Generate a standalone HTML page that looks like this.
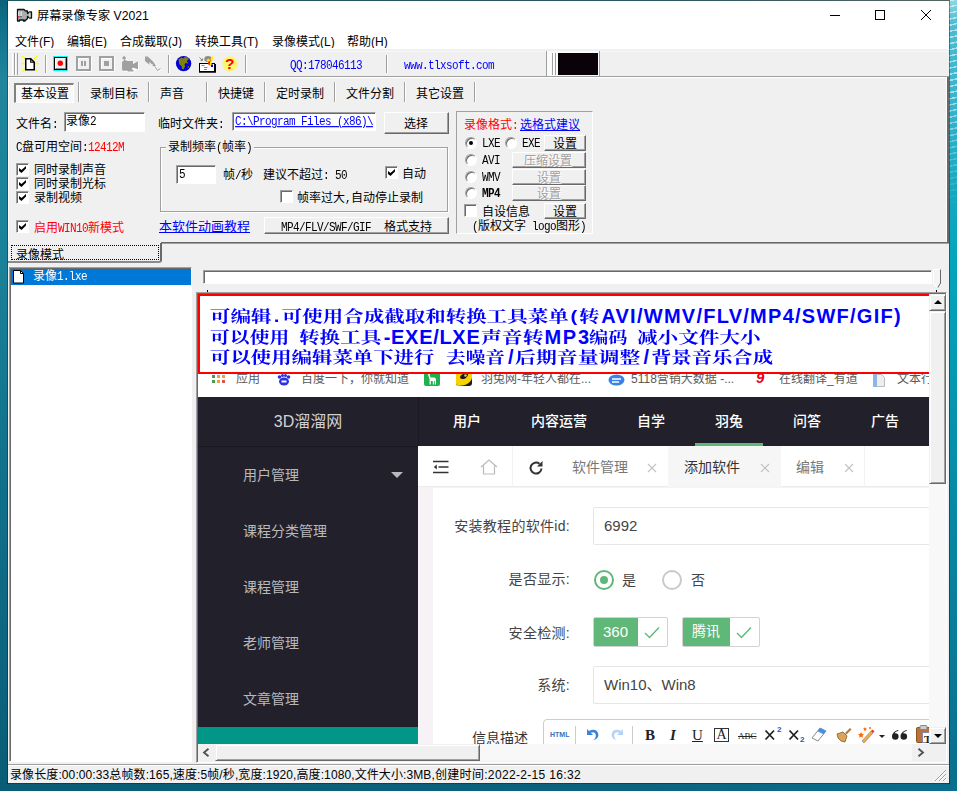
<!DOCTYPE html>
<html lang="zh-CN">
<head>
<meta charset="utf-8">
<title>屏幕录像专家 V2021</title>
<style>
*{box-sizing:border-box;margin:0;padding:0}
html,body{width:957px;height:791px;overflow:hidden}
body{position:relative;background:#0c607a;font-family:"Liberation Sans","Noto Sans CJK SC",sans-serif;font-size:12px;color:#000}
.abs,.abs>*{position:absolute}
#bgL{left:0;top:0;width:8px;height:791px;background:linear-gradient(#0c627a 0,#10708a 3%,#1f869c 10%,#1a8299 32%,#10718b 60%,#0a5c76 100%)}
#bgR{left:949px;top:0;width:8px;height:791px;background:linear-gradient(#8fd6e2 0,#4cbcd2 3%,#34b3cc 14%,#16a8c1 24%,#04a5bc 33%,#0886a3 67%,#0a6e8c 100%)}
#bgRt{left:949px;top:0;width:8px;height:210px;background:repeating-linear-gradient(168deg,rgba(255,255,255,.55) 0,rgba(255,255,255,.55) 1.500px,rgba(255,255,255,0) 1.500px,rgba(255,255,255,0) 6px);-webkit-mask-image:linear-gradient(#000 0,#000 45%,transparent 100%);mask-image:linear-gradient(#000 0,#000 45%,transparent 100%)}
#bgB{left:0;top:783px;width:957px;height:8px;background:linear-gradient(90deg,#0a5c76,#0b627c 60%,#0a6e8c)}
#bgT{left:7px;top:0;width:943px;height:1px;background:linear-gradient(90deg,#1d5560,#2b5761 70%,#566562)}
#bdL{left:7px;top:1px;width:1px;height:783px;background:rgba(0,0,0,.3)}#bdR{left:949px;top:1px;width:1px;height:783px;background:rgba(0,0,0,.38)}#bdB{left:7px;top:783px;width:943px;height:1px;background:rgba(0,0,0,.3)}
#win{left:8px;top:1px;width:941px;height:782px;background:#f0f0f0;overflow:hidden}
/* everything inside #win positioned relative to page using offset -8,-1 */
#win>.in{left:-8px;top:-1px;width:957px;height:791px}
.in>*{position:absolute}
/* fonts */
.ui{font:12px/16px "Liberation Sans","Noto Sans CJK SC",sans-serif;white-space:nowrap}
.s{font:12px/14px "Noto Sans CJK SC","Liberation Sans",sans-serif;white-space:nowrap;color:#000}
.s b{display:inline-block;font:11px/14px "Liberation Mono",monospace;letter-spacing:-.6px;font-weight:400;transform:scaleY(1.18);transform-origin:0 76%;white-space:pre}
.lnk b{text-decoration:underline}
.red{color:#f00}.blue{color:#00f}.lnk{color:#00f;text-decoration:underline}
.gray{color:#a0a0a0;text-shadow:1px 1px #fff}
.sep{width:2px;border-left:1px solid #a0a0a0;border-right:1px solid #fff}
.grip{width:3px;border-left:1px solid #fff;border-right:1px solid #a0a0a0;background:#f0f0f0}
.sunk{background:#fff;border:1px solid;border-color:#a0a0a0 #fff #fff #a0a0a0;box-shadow:inset 1px 1px #696969}
.btn{background:#f0f0f0;border:1px solid;border-color:#fff #696969 #696969 #fff;box-shadow:inset -1px -1px #a0a0a0;text-align:center}
.cb{width:13px;height:13px;background:#fff;border:1px solid;border-color:#a0a0a0 #fff #fff #a0a0a0;box-shadow:inset 1px 1px #696969}
.cb.on:after{content:"";position:absolute;left:2px;top:2px;width:7px;height:7px;background:#000;clip-path:polygon(0 28%,0 72%,36% 100%,100% 36%,100% 0,36% 58%)}
.rb{width:12px;height:12px;border-radius:50%;background:#fff;border:1px solid;border-color:#a0a0a0 #fff #fff #a0a0a0;box-shadow:inset 1px 1px #696969}
.rb.on:after{content:"";position:absolute;left:3px;top:3px;width:4px;height:4px;border-radius:50%;background:#000}
.tsep{width:2px;height:20px;top:82px;border-left:1px solid #a0a0a0;border-right:1px solid #fff}
.pv{font-family:"Liberation Sans","Noto Sans CJK SC",sans-serif;white-space:nowrap}
.sb{color:#b9b9bd;font-size:14px;line-height:20px;left:45px}
.nav{color:#fff;font-size:14px;line-height:20px;top:117px;font-weight:500}
.lab{color:#444;font-size:14px;line-height:20px;text-align:right;width:140px;left:232px;letter-spacing:.3px}
.tip i{display:inline-block;width:8px;font-style:normal;text-align:center}
.tip{font:bold 16px/20px "Liberation Sans","Noto Serif CJK SC",serif;color:#00f;transform:scaleX(1.29);transform-origin:0 0;white-space:nowrap}
#pv>*{position:absolute}
.bk{font-size:12px;line-height:14px;color:#5a5a5a;top:78px}
.tab{font-size:14px;line-height:20px;top:163px;color:#777}
.x{font-size:17px;line-height:20px;top:161px;color:#bbb;font-weight:300}
.rd{width:20px;height:20px;border-radius:50%;border:2px solid #c9c9c9;background:#fff;top:275.5px}
.ck{height:30px;top:323px;border:1px solid #d2d2d2;border-radius:2px;background:#fff;overflow:hidden}
.inp{left:395px;width:400px;height:38px;border:1px solid #e6e6e6;border-radius:2px;background:#fff}
.rs{background:#f0f0f0;border:1px solid;border-color:#f0f0f0 #696969 #696969 #f0f0f0;box-shadow:inset 1px 1px #fff,inset -1px -1px #a0a0a0}
</style>
</head>
<body>
<div class="abs">
<div id="bgL"></div><div id="bgR"></div><div id="bgRt"></div><div id="bgB"></div><div id="bgT"></div><div id="bdL"></div><div id="bdR"></div><div id="bdB"></div>
<div id="win" class="abs"><div class="in">
<div style="left:8px;top:1px;width:941px;height:30px;background:#fff"></div>
<svg style="left:16px;top:8px" width="17" height="14" viewBox="0 0 17 14"><path d="M1.500 1.500h6.500l1.500 1.500h2v2.500l2-1.500h2v6h-2l-2-1.500v2l-1.500 1.500h-1v1h-1.500v-1h-4v1h-2v-2.500z" fill="#a9aea9" stroke="#111" stroke-width="1.300" stroke-linejoin="round"/><path d="M2.500 3.500v5M4 3.500v5M5.500 3.500v5" stroke="#e8e8e8" stroke-width=".8"/><rect x="1.800" y="8" width="1.300" height="1.300" fill="#e33"/><rect x="3.100" y="8" width="1.300" height="1.300" fill="#3a3"/><rect x="4.400" y="8" width="1.300" height="1.300" fill="#33e"/><path d="M13.800 4.500v5" stroke="#ddd" stroke-width="1"/></svg>
<div class="ui" style="left:37px;top:8px;font-size:12.2px">屏幕录像专家 V2021</div>
<svg style="left:826px;top:1px" width="123" height="30" viewBox="0 0 123 30" fill="none" stroke="#000" stroke-width="1"><path d="M4 14.500H14"/><rect x="49.500" y="9.500" width="9" height="9"/><path d="M95 9L105 19M105 9L95 19"/></svg>
<!--TITLE-->
<div style="left:8px;top:31px;width:941px;height:18px;background:#fff"></div>
<div class="ui" style="left:15px;top:33.6px">文件(F)</div>
<div class="ui" style="left:67px;top:33.6px">编辑(E)</div>
<div class="ui" style="left:120px;top:33.6px">合成截取(J)</div>
<div class="ui" style="left:195px;top:33.6px">转换工具(T)</div>
<div class="ui" style="left:272px;top:33.6px">录像模式(L)</div>
<div class="ui" style="left:347px;top:33.6px">帮助(H)</div>
<div style="left:8px;top:48px;width:941px;height:1px;background:#fff"></div><div style="left:8px;top:49px;width:941px;height:2px;background:#f0f0f0"></div>
<!--MENU-->
<div style="left:8px;top:51px;width:941px;height:1px;background:#f8f8f8"></div>
<div style="left:8px;top:76px;width:941px;height:1px;background:#a0a0a0"></div>
<div style="left:8px;top:77px;width:941px;height:1px;background:#fff"></div>
<div class="grip" style="left:12px;top:53px;height:22px"></div><div class="grip" style="left:15px;top:53px;height:22px"></div>
<svg style="left:21px;top:55px" width="18" height="18" viewBox="0 0 18 18"><path d="M1.500 1l4 4M16.500 1l-4 4M0.500 8.500h3.500M17.500 8.500h-3M1.500 16.500l4-4M16.500 16.500l-4-4" stroke="#ff0" stroke-width="1.600"/><path d="M4.750 3.750h5l3.500 3.500v7.500h-8.500z" fill="#fff" stroke="#000" stroke-width="1.500"/><path d="M9.750 3.750v3.500h3.500" fill="none" stroke="#000" stroke-width="1.200"/></svg>
<div class="sep" style="left:45px;top:55px;height:18px"></div>
<svg style="left:53px;top:56px" width="15" height="15" viewBox="0 0 15 15"><rect x="0.500" y="0.500" width="14" height="14" fill="#f0f0f0" stroke="#0ff"/><rect x="1.500" y="1.500" width="12" height="12" fill="#f0f0f0" stroke="#000"/><path d="M2.500 12.700h10.200V2.500" fill="none" stroke="#000" stroke-width=".5"/><path d="M2.500 12V2.500H12" fill="none" stroke="#fff"/><circle cx="7.300" cy="7.300" r="2.700" fill="#f00"/></svg>
<svg style="left:76px;top:56px" width="16" height="16" viewBox="0 0 16 16"><rect x="1.500" y="1.500" width="14" height="14" fill="none" stroke="#fff"/><rect x="1" y="1" width="13" height="13" fill="#f0f0f0" stroke="#a0a0a0" stroke-width="2"/><path d="M2.500 12.500V2.500H12.500" fill="none" stroke="#fff"/><rect x="5" y="5" width="2" height="5" fill="#a0a0a0"/><rect x="8" y="5" width="2" height="5" fill="#a0a0a0"/></svg>
<svg style="left:99px;top:56px" width="16" height="16" viewBox="0 0 16 16"><rect x="1.500" y="1.500" width="14" height="14" fill="none" stroke="#fff"/><rect x="1" y="1" width="13" height="13" fill="#f0f0f0" stroke="#a0a0a0" stroke-width="2"/><path d="M2.500 12.500V2.500H12.500" fill="none" stroke="#fff"/><rect x="5" y="5" width="5" height="5" fill="#a0a0a0"/></svg>
<svg style="left:121px;top:55px" width="19" height="19" viewBox="0 0 19 19"><g transform="translate(1 1)" fill="#fff"><path d="M3 .8L5.300 3.200 3.500 5 1 3.200z"/><path d="M3 4.500l3.500 1.500H12v3l5-2.800v8l-2.500-.6-2 1.400v1.500H7l-.5-.8H2L1 14.500V7l1.500-1z"/></g><g fill="#a0a0a0"><path d="M3 .8L5.300 3.200 3.500 5 1 3.200z"/><path d="M3 4.500l3.500 1.500H12v3l5-2.800v8l-2.500-.6c-1.500-1.800-3.500-.8-4 .6l2 .8v1.500H7l-.5-.8H2L1 14.500V7l1.500-1z"/></g></svg>
<svg style="left:144px;top:55px" width="19" height="19" viewBox="0 0 19 19"><g transform="translate(1 1)"><path d="M1 1.500h2.800l5.700 5.500 2.500 4-2 .5L4.500 9 1 6z" fill="#fff"/><path d="M11 11.500l2.500 4 3-2" fill="none" stroke="#fff"/></g><path d="M1 1.500h2.800l5.700 5.500 2.500 4-2 .5L4.500 9 1 6z" fill="#a0a0a0"/><path d="M5.500 7.500c.5 1.500 2 2.500 3.500 2.500" fill="none" stroke="#f0f0f0" stroke-width="1.200"/><path d="M11 11.500l2.500 4 3-2" fill="none" stroke="#a0a0a0"/></svg>
<div class="sep" style="left:168px;top:55px;height:18px"></div>
<svg style="left:175px;top:55px" width="17" height="17" viewBox="0 0 17 17"><circle cx="8.600" cy="8.600" r="7.700" fill="#0000d8"/><path d="M3.500 4.500l3-2 1.500 1 2-1.500 2.500.5L14 4l-1.500 1-.5 2 1.500 1-1 .5-2-.5-1 1.500.5 2-1.500 3-1.500-.5-.5-3-2-1.500-.5-2z" fill="#808010"/><path d="M13 11l1 .5-.5 1.500-1-.5z" fill="#808010"/></svg>
<svg style="left:198px;top:55px" width="18" height="18" viewBox="0 0 18 18"><rect x="1.500" y="8.500" width="15" height="8" fill="#fff" stroke="#000"/><path d="M1 17h16.500V9" fill="none" stroke="#000" stroke-width="1.400"/><path d="M3.500 10.500h3M6 12.500h3.500M6 14.500h3" stroke="#888"/><path d="M1.500 2.500l3 3M4.500 3.500v2h-2" stroke="#888" fill="none"/><ellipse cx="10" cy="4" rx="3.800" ry="3" fill="#8c8c8c"/><path d="M8.500 5l2-1.500 1 1.500L15.500 0l-1 5-1 2.500.5 3-2 .5-1.500-2.500-1-2z" fill="#ffee00"/><path d="M9.500 6l1.500 1 2-3.500-1 4-.5 3-1-.5-.2-2.500z" fill="#f00"/><rect x="13" y="9.500" width="2" height="2.500" fill="#0000e0"/></svg>
<svg style="left:222px;top:56px" width="16" height="16" viewBox="0 0 16 16"><circle cx="7.800" cy="7.800" r="7.500" fill="#fff56e"/><text x="7.800" y="13.200" text-anchor="middle" font-family="Liberation Sans,sans-serif" font-weight="bold" font-size="15.500" fill="#f00">?</text></svg>
<div class="sep" style="left:245px;top:55px;height:18px"></div>
<div class="s blue" style="left:290px;top:57px"><b>QQ:178046113</b></div>
<div class="sep" style="left:386px;top:55px;height:18px"></div>
<div class="s blue" style="left:404px;top:57px"><b>www.tlxsoft.com</b></div>
<div style="left:546px;top:51px;width:54px;height:25px;background:#fafafa;border-left:1px solid #a0a0a0;border-right:1px solid #a0a0a0"></div>
<div class="grip" style="left:550px;top:53px;height:22px;background:#fafafa"></div><div class="grip" style="left:553px;top:53px;height:22px;background:#fafafa"></div>
<div style="left:558px;top:53px;width:40px;height:22px;background:#0a0208"></div>
<!--TOOLBAR-->
<div style="left:14px;top:83px;width:60px;height:20px;background:#f8f8f8;border:solid;border-width:2px 1px 1px 2px;border-color:#808080 #fff #fff #808080"></div>
<div class="s" style="left:21px;top:86px">基本设置</div>
<div class="tsep" style="left:78px"></div>
<div class="s" style="left:90px;top:86px">录制目标</div>
<div class="tsep" style="left:148px"></div>
<div class="s" style="left:160px;top:86px">声音</div>
<div class="tsep" style="left:206px"></div>
<div class="s" style="left:218px;top:86px">快捷键</div>
<div class="tsep" style="left:264px"></div>
<div class="s" style="left:276px;top:86px">定时录制</div>
<div class="tsep" style="left:334px"></div>
<div class="s" style="left:346px;top:86px">文件分割</div>
<div class="tsep" style="left:404px"></div>
<div class="s" style="left:416px;top:86px">其它设置</div>
<div class="tsep" style="left:474px"></div>
<div style="left:946px;top:77px;width:1px;height:165px;background:#fff"></div><div style="left:947px;top:77px;width:2px;height:167px;background:#696969"></div>
<div style="left:8px;top:78px;width:1px;height:164px;background:#fff"></div>
<!--TABS-->
<div class="s" style="left:16px;top:116px">文件名<b>:</b></div>
<div class="sunk" style="left:64px;top:112px;width:81px;height:20px"></div>
<div class="s" style="left:66px;top:113px">录像<b>2</b></div>
<div class="s" style="left:158px;top:116px">临时文件夹<b>:</b></div>
<div class="sunk" style="left:232px;top:112px;width:144px;height:19px"></div>
<div class="s lnk" style="left:235px;top:113px"><b>C:\Program Files (x86)\</b></div>
<div class="btn" style="left:384px;top:112px;width:65px;height:22px"></div>
<div class="s" style="left:404px;top:116px">选择</div>
<div class="s" style="left:16px;top:139px"><b>C</b>盘可用空间<b>:</b><span class="red"><b>12412M</b></span></div>
<div class="cb on" style="left:16px;top:163px"></div><div class="s" style="left:34px;top:162px">同时录制声音</div>
<div class="cb on" style="left:16px;top:177px"></div><div class="s" style="left:34px;top:176px">同时录制光标</div>
<div class="cb on" style="left:16px;top:191px"></div><div class="s" style="left:34px;top:190px">录制视频</div>
<div class="cb on" style="left:16px;top:220px"></div><div class="s red" style="left:34px;top:220px">启用<b>WIN10</b>新模式</div>
<div style="left:160px;top:147px;width:288px;height:65px;border:1px solid #a0a0a0;box-shadow:inset 1px 1px #fff,1px 1px #fff"></div>
<div class="s" style="left:166px;top:139px;background:#f0f0f0;padding:0 2px">录制频率<b>(</b>帧率<b>)</b></div>
<div class="sunk" style="left:176px;top:165px;width:40px;height:19px"></div>
<div class="s" style="left:179px;top:166px"><b>5</b></div>
<div class="s" style="left:223px;top:167px">帧<b>/</b>秒</div>
<div class="s" style="left:263px;top:167px">建议不超过<b>: 50</b></div>
<div class="cb on" style="left:385px;top:166px"></div><div class="s" style="left:402px;top:166px">自动</div>
<div class="cb" style="left:280px;top:190px"></div><div class="s" style="left:297px;top:190px">帧率过大<b>,</b>自动停止录制</div>
<div class="s lnk" style="left:159px;top:219px;font-size:13px">本软件动画教程</div>
<div class="btn" style="left:264px;top:217px;width:185px;height:17px"></div>
<div class="s" style="left:281px;top:219px"><b>MP4/FLV/SWF/GIF</b></div><div class="s" style="left:384px;top:219px">格式支持</div>
<div style="left:456px;top:111px;width:137px;height:123px;border:1px solid;border-color:#a0a0a0 #fff #fff #a0a0a0"></div>
<div class="s red" style="left:464px;top:117px">录像格式<b>:</b></div><div class="s lnk" style="left:520px;top:117px">选格式建议</div>
<div class="rb on" style="left:465px;top:137px"></div><div class="s" style="left:482px;top:135px"><b>LXE</b></div>
<div class="rb" style="left:505px;top:137px"></div><div class="s" style="left:522px;top:135px"><b>EXE</b></div>
<div class="btn" style="left:544px;top:135px;width:42px;height:16px"></div><div class="s" style="left:553px;top:136px">设置</div>
<div class="rb" style="left:465px;top:154px"></div><div class="s" style="left:482px;top:152px"><b>AVI</b></div>
<div class="btn" style="left:512px;top:152px;width:74px;height:16px"></div><div class="s gray" style="left:524px;top:153px">压缩设置</div>
<div class="rb" style="left:465px;top:171px"></div><div class="s" style="left:482px;top:169px"><b>WMV</b></div>
<div class="btn" style="left:512px;top:169px;width:74px;height:16px"></div><div class="s gray" style="left:537px;top:170px">设置</div>
<div class="rb" style="left:465px;top:187px"></div><div class="s" style="left:482px;top:185px"><b style="font-weight:700">MP4</b></div>
<div class="btn" style="left:512px;top:185px;width:74px;height:16px"></div><div class="s gray" style="left:537px;top:186px">设置</div>
<div class="cb" style="left:464px;top:204px"></div><div class="s" style="left:482px;top:204px">自设信息</div>
<div class="btn" style="left:544px;top:203px;width:42px;height:16px"></div><div class="s" style="left:553px;top:204px">设置</div>
<div class="s" style="left:472px;top:218px"><b>(</b>版权文字<b> logo</b>图形<b>)</b></div>
<!--SETTINGS-->
<div style="left:161px;top:242px;width:788px;height:2px;background:#696969;border-bottom:1px solid #a0a0a0"></div>
<div style="left:11px;top:245px;width:148px;height:15px;border:1px dotted #000"></div>
<div style="left:8px;top:243px;width:154px;height:20px;border-right:2px solid #696969;border-bottom:2px solid #8a8a8a;border-radius:0 0 3px 0"></div>
<div class="s" style="left:16px;top:247px">录像模式</div>
<div style="left:9px;top:267px;width:183px;height:495px;background:#fff;border:1px solid;border-color:#a0a0a0 #fff #fff #a0a0a0;box-shadow:inset 1px 1px #696969"></div>
<div style="left:11px;top:269px;width:180px;height:16px;background:#0078d7"></div>
<svg style="left:13px;top:270px" width="12" height="14" viewBox="0 0 12 14"><path d="M0.500 0.500h7l3 3v9.500h-10z" fill="#fff" stroke="#000"/><path d="M7.500 0.500v3h3" fill="none" stroke="#000"/></svg>
<div class="s" style="left:33px;top:268px;color:#fff">录像<b>1.lxe</b></div>
<!--LEFT-->
<div class="sunk" style="left:203px;top:270px;width:729px;height:14px"></div>
<div style="left:933px;top:269px;width:8px;height:15px;background:#f4f4f4;border:1px solid;border-color:#fff #696969 #f4f4f4 #fff"></div>
<svg style="left:933px;top:283px" width="9" height="6" viewBox="0 0 9 6"><path d="M0.500 0L4.500 5 7.500 0z" fill="#f4f4f4"/><path d="M4.500 5L7.500 0" stroke="#696969" fill="none"/><path d="M0.500 0L4.500 5" stroke="#fff" fill="none"/></svg>
<div style="left:207px;top:290px;width:1px;height:2px;background:#000"></div><div style="left:936px;top:290px;width:1px;height:2px;background:#000"></div>
<div style="left:196px;top:292px;width:751px;height:471px;border:1px solid;border-color:#a0a0a0 #fff #fff #a0a0a0;box-shadow:inset 1px 1px #696969"></div>
<div id="pv" class="pv" style="left:198px;top:294px;width:731px;height:450px;overflow:hidden;background:#fff">
<div style="left:0;top:79px;width:731px;height:24px;background:#fff"></div>
<svg style="left:14px;top:81px" width="14" height="9" viewBox="0 0 14 9"><rect x="0" y="0" width="3" height="3" fill="#4a9c4a"/><rect x="5" y="0" width="3" height="3" fill="#e8a33d"/><rect x="10" y="0" width="3" height="3" fill="#e8a33d"/><rect x="0" y="5" width="3" height="3" fill="#4a9c4a"/><rect x="5" y="5" width="3" height="3" fill="#e8a33d"/><rect x="10" y="5" width="3" height="3" fill="#d9534f"/></svg>
<div class="bk" style="left:38px">应用</div>
<svg style="left:79px;top:80px" width="14" height="12" viewBox="0 0 14 12"><ellipse cx="7" cy="7.500" rx="5" ry="4" fill="#2a32e0"/><circle cx="2.500" cy="3" r="1.800" fill="#2a32e0"/><circle cx="11.500" cy="3" r="1.800" fill="#2a32e0"/><circle cx="5.500" cy="1.500" r="1.500" fill="#2a32e0"/><circle cx="8.500" cy="1.500" r="1.500" fill="#2a32e0"/><rect x="4.500" y="6.500" width="5" height="2" fill="#fff"/></svg>
<div class="bk" style="left:103px">百度一下，你就知道</div>
<svg style="left:226px;top:76px" width="16" height="16" viewBox="0 0 16 16"><rect width="16" height="16" rx="2" fill="#1fb14e"/><path d="M4 4.500c0-1 1-1.500 1.500-.5l1 3.500h3.500c1.500 0 2 1 2 2.500v4.500h-1.200v-3.500h-.8v3.500h-1.200v-3.500h-2v3.500h-1.200v-5z" fill="#fff"/></svg>
<svg style="left:258px;top:76px" width="16" height="16" viewBox="0 0 16 16"><rect width="16" height="16" rx="3" fill="#1a1a1a"/><path d="M0 3a3 3 0 0 1 3-3h10a3 3 0 0 1 3 3v5c-1 4-5 7-10 7.500l-4 .5a3 3 0 0 1-2-3z" fill="#f8d200"/><path d="M4 7c1-3 5-4.500 8-3 0 3-3 5.500-6 5-1.300-.2-2-1-2-2z" fill="#1a1a1a"/><circle cx="9.500" cy="5.500" r="1.300" fill="#f8d200"/></svg>
<div class="bk" style="left:283px">羽兔网-年轻人都在...</div>
<svg style="left:410px;top:80px" width="17" height="12" viewBox="0 0 17 12"><ellipse cx="8.500" cy="6" rx="8" ry="5.500" fill="#3b82e8"/><path d="M4 5h9M4 8h7" stroke="#fff" stroke-width="1.500"/></svg>
<div class="bk" style="left:433px">5118营销大数据 -...</div>
<div style="left:558px;top:76px;font:italic bold 15px/16px 'Liberation Sans',sans-serif;color:#e60012">9</div>
<div class="bk" style="left:581px">在线翻译_有道</div>
<svg style="left:675px;top:80px" width="12" height="13" viewBox="0 0 12 13"><path d="M0.500 0.500h8l3 3v9h-11z" fill="#eee" stroke="#bbb"/><rect x="0" y="0" width="4" height="13" fill="#8fb4e6"/></svg>
<div class="bk" style="left:699px">文本行</div>
<div style="left:0;top:0;width:780px;height:80px;border:2px solid #f00;background:#fff"></div>
<div class="tip" style="left:12.1px;top:13px;transform:scaleX(1.281)">可编辑<i>.</i>可使用合成截取和转换工具菜单<i>(</i>转</div>
<div class="tip" style="left:403.3px;top:12px;transform:none;font-size:20px;letter-spacing:1.26px">AVI/WMV/FLV/MP4/SWF/GIF)</div>
<div class="tip" style="left:12.1px;top:34px;transform:scaleX(1.239)">可以使用</div>
<div class="tip" style="left:101.4px;top:34px;transform:scaleX(1.289)">转换工具</div>
<div class="tip" style="left:185.7px;top:33px;transform:none;font-size:20px;letter-spacing:0.7px">-EXE/LXE</div>
<div class="tip" style="left:283.2px;top:34px;transform:scaleX(1.302)">声音转</div>
<div class="tip" style="left:346.4px;top:33px;transform:none;font-size:20px;letter-spacing:1.8px">MP3</div>
<div class="tip" style="left:390.9px;top:34px;transform:scaleX(1.199)">编码</div>
<div class="tip" style="left:439.4px;top:34px;transform:scaleX(1.288)">减小文件大小</div>
<div class="tip" style="left:12.1px;top:54px;transform:scaleX(1.275)">可以使用编辑菜单下进行</div>
<div class="tip" style="left:248.1px;top:54px;transform:scaleX(1.229)">去噪音</div>
<div class="tip" style="left:310.1px;top:53px;transform:none;font-size:20px;letter-spacing:0.00px">/</div>
<div class="tip" style="left:317.3px;top:54px;transform:scaleX(1.306)">后期音量调整</div>
<div class="tip" style="left:445.5px;top:53px;transform:none;font-size:20px;letter-spacing:0.00px">/</div>
<div class="tip" style="left:452.8px;top:54px;transform:scaleX(1.271)">背景音乐合成</div>
<div style="left:0;top:103px;width:731px;height:49px;background:#22212b"></div>
<div style="left:0;top:152px;width:220px;height:281px;background:#22212b"></div>
<div style="left:0;top:433px;width:220px;height:17px;background:#009688"></div>
<div style="left:0;top:152px;width:220px;height:1px;background:#181820"></div><div style="left:220px;top:103px;width:1px;height:49px;background:#1a1a22"></div>
<div style="left:0;top:118px;width:220px;text-align:center;font-size:16px;line-height:20px;color:#d2d2d4">3D溜溜网</div>
<div class="nav" style="left:255px">用户</div><div class="nav" style="left:333px">内容运营</div><div class="nav" style="left:439px">自学</div><div class="nav" style="left:517px">羽兔</div><div class="nav" style="left:595px">问答</div><div class="nav" style="left:673px">广告</div>
<div style="left:497px;top:149px;width:68px;height:3px;background:#5fb878"></div>
<div class="sb" style="top:171px">用户管理</div>
<div style="left:193px;top:178px;border:6px solid transparent;border-top:6px solid #b9b9bd;border-bottom:0"></div>
<div class="sb" style="top:227px">课程分类管理</div>
<div class="sb" style="top:283px">课程管理</div>
<div class="sb" style="top:339px">老师管理</div>
<div class="sb" style="top:395px">文章管理</div>
<div style="left:220px;top:152px;width:511px;height:41px;background:#fff;border-bottom:1px solid #ececec"></div>
<div style="left:220px;top:193px;width:511px;height:257px;background:#f7f2f5"></div>
<div style="left:235px;top:194px;width:520px;height:260px;background:#fff"></div>
<svg style="left:235px;top:166px" width="16" height="14" viewBox="0 0 16 14" stroke="#333" stroke-width="1.500" fill="none"><path d="M0 1.500h15.500M5.500 7h10M0 12.500h15.500"/><path d="M3.800 4.500L0.800 7l3 2.500z" fill="#333" stroke="none"/></svg>
<svg style="left:282px;top:165px" width="18" height="16" viewBox="0 0 18 16" stroke="#bbb" stroke-width="1.200" fill="none"><path d="M1 8L9 1l8 7M3.500 6.500V15h11V6.500"/></svg>
<div style="left:314px;top:152px;width:1px;height:41px;background:#f2f2f2"></div>
<svg style="left:330px;top:166px" width="16" height="16" viewBox="0 0 16 16" fill="none" stroke="#333" stroke-width="2"><path d="M13.500 8.500a5.500 5.500 0 1 1-2-4.700"/><path d="M14.500 1v5.500H9z" fill="#333" stroke="none"/></svg>
<div class="tab" style="left:374px">软件管理</div><svg style="left:449px;top:169px" width="10" height="10" viewBox="0 0 10 10" stroke="#c2c2c2" stroke-width="1.1" fill="none"><path d="M1 1l8 8M9 1l-8 8"/></svg>
<div style="left:470px;top:152px;width:113px;height:41px;background:#f6f6f6"></div>
<div class="tab" style="left:486px;color:#333">添加软件</div><svg style="left:561.5px;top:169px" width="10" height="10" viewBox="0 0 10 10" stroke="#c2c2c2" stroke-width="1.1" fill="none"><path d="M1 1l8 8M9 1l-8 8"/></svg>
<div class="tab" style="left:598px">编辑</div><svg style="left:645.5px;top:169px" width="10" height="10" viewBox="0 0 10 10" stroke="#c2c2c2" stroke-width="1.1" fill="none"><path d="M1 1l8 8M9 1l-8 8"/></svg>
<div style="left:666px;top:152px;width:1px;height:41px;background:#f2f2f2"></div>
<!--PVTABS-->
<div class="lab" style="top:222px">安装教程的软件id:</div>
<div class="inp" style="top:213px"></div><div style="left:406px;top:222px;font-size:15px;line-height:20px;color:#444">6992</div>
<div class="lab" style="top:275px">是否显示:</div>
<div class="rd" style="left:395.500px;border-color:#5fb878"></div><div style="left:401.500px;top:281.500px;width:8px;height:8px;border-radius:50%;background:#5fb878"></div>
<div style="left:424px;top:276px;font-size:14px;line-height:20px;color:#444">是</div>
<div class="rd" style="left:464px"></div>
<div style="left:493px;top:276px;font-size:14px;line-height:20px;color:#444">否</div>
<div class="lab" style="top:329px">安全检测:</div>
<div class="ck" style="left:395px;width:75px"><div style="position:absolute;left:-1px;top:-1px;width:45px;height:30px;background:#5fb878;color:#fff;font-size:15px;line-height:29px;text-align:center">360</div><svg style="position:absolute;left:50px;top:8px" width="16" height="13" viewBox="0 0 16 13" fill="none" stroke="#5fb878" stroke-width="1.400"><path d="M1 7l4.500 4.500L15 1.500"/></svg></div>
<div class="ck" style="left:484px;width:78px"><div style="position:absolute;left:-1px;top:-1px;width:48px;height:30px;background:#5fb878;color:#fff;font-size:14px;line-height:29px;text-align:center">腾讯</div><svg style="position:absolute;left:53px;top:8px" width="16" height="13" viewBox="0 0 16 13" fill="none" stroke="#5fb878" stroke-width="1.400"><path d="M1 7l4.500 4.500L15 1.500"/></svg></div>
<div class="lab" style="top:381px">系统:</div>
<div class="inp" style="top:372px"></div><div style="left:406px;top:381px;font-size:15px;line-height:20px;color:#444">Win10、Win8</div>
<div style="left:274px;top:434px;font-size:14px;line-height:20px;color:#333">信息描述</div>
<div style="left:345px;top:425px;width:420px;height:40px;border:1px solid #ccc;border-radius:4px;background:#fff"></div>
<div style="left:352px;top:436px;font:bold 7px/10px 'Liberation Sans',sans-serif;color:#3a6fb5">HTML</div>
<div style="left:377px;top:432px;width:1px;height:20px;background:#ccc"></div>
<svg style="left:387px;top:434px" width="15" height="14" viewBox="0 0 15 14"><path d="M2 1v6h6L5.800 4.800c2-1.300 5-.3 5 2.700 0 2-1 3.500-2.500 4.500 3.500-.5 5.500-3 5-6C12.800 2 8 .5 4 3z" fill="#3b83d8"/></svg>
<svg style="left:412px;top:434px" width="15" height="14" viewBox="0 0 15 14"><path d="M13 1v6H7l2.200-2.200c-2-1.300-5-.3-5 2.700 0 2 1 3.500 2.500 4.500-3.500-.5-5.500-3-5-6C2.200 2 7 .5 11 3z" fill="#b5d3f3"/></svg>
<div style="left:434px;top:432px;width:1px;height:20px;background:#ccc"></div>
<div style="left:447px;top:433px;font:bold 15px/16px 'Liberation Serif',serif;color:#222">B</div>
<div style="left:472px;top:433px;font:italic bold 15px/16px 'Liberation Serif',serif;color:#222">I</div>
<div style="left:494px;top:433px;font:15px/16px 'Liberation Serif',serif;color:#222;text-decoration:underline">U</div>
<div style="left:516px;top:434px;width:15px;height:14px;border:1px solid #333;font:14px/12px 'Liberation Serif',serif;color:#222;text-align:center">A</div>
<div style="left:540px;top:436px;font:9px/12px 'Liberation Serif',serif;color:#222;text-decoration:line-through">ABC</div>
<svg style="left:566px;top:435px" width="12" height="12" viewBox="0 0 12 12" stroke="#222" stroke-width="1.800" fill="none"><path d="M1.500 1.500l8.500 9M10 1.500l-8.500 9"/></svg><div style="left:579px;top:431px;font:bold 8px/9px 'Liberation Sans',sans-serif;color:#25c">2</div>
<svg style="left:590px;top:435px" width="12" height="12" viewBox="0 0 12 12" stroke="#222" stroke-width="1.800" fill="none"><path d="M1.500 1.500l8.500 9M10 1.500l-8.500 9"/></svg><div style="left:602px;top:441px;font:bold 8px/9px 'Liberation Sans',sans-serif;color:#25c">2</div>
<svg style="left:612px;top:433px" width="18" height="16" viewBox="0 0 18 16"><path d="M10 1l6 3-8 10-6-3z" fill="#fff" stroke="#889" stroke-width="1"/><path d="M10 1l6 3-2.500 3.200-6-3z" fill="#4a90e2"/></svg>
<svg style="left:636px;top:433px" width="18" height="16" viewBox="0 0 18 16"><path d="M11 6l5-5 1.500 1.500-5 5z" fill="#b07a3a"/><path d="M3 7l6-2 4 4-2 6-4-1-3-3z" fill="#d9a55a" stroke="#8a5a20" stroke-width=".8"/></svg>
<svg style="left:660px;top:432px" width="18" height="17" viewBox="0 0 18 17"><path d="M4 15l9-10 2 2-9 10z" fill="#e8b04a" stroke="#a66" stroke-width=".6"/><path d="M13 5l1.500-1.500 2 2L15 7z" fill="#e33"/><path d="M3 6l1 2 2 .3-1.500 1.400.4 2L3 10.700 1.200 11.700l.4-2L0 8.300 2 8z" fill="#f60"/><path d="M7 1l.6 1.300 1.400.2-1 1 .2 1.400L7 4.300 5.800 4.900 6 3.500l-1-1 1.400-.2z" fill="#f60"/><circle cx="12" cy="2" r="1" fill="#f60"/></svg>
<div style="left:681px;top:441px;border:3px solid transparent;border-top:3px solid #222;border-bottom:0;width:0;height:0"></div>
<svg style="left:694px;top:436px" width="16" height="10" viewBox="0 0 16 10" fill="#222"><path d="M6 0C2.500 1 0 3.500 0 6.500a3.300 3.300 0 1 0 3.300-3.300c-.3 0-.5 0-.8.100C3.200 2.200 4.500 1.300 6.500 .8zM14.500 0C11 1 8.500 3.500 8.500 6.500a3.300 3.300 0 1 0 3.300-3.300c-.3 0-.5 0-.8.100C11.700 2.200 13 1.300 15 .8z"/></svg>
<svg style="left:718px;top:431px" width="16" height="18" viewBox="0 0 16 18"><rect x="0.500" y="2.500" width="14" height="15" rx="1" fill="#b8733a" stroke="#8a5020"/><rect x="4" y="0.500" width="7" height="4" rx="1" fill="#ccc" stroke="#888"/><rect x="6.500" y="7.500" width="10" height="10" fill="#fff" stroke="#88a"/></svg>
<div style="left:726px;top:439px;font:bold 11px/12px 'Liberation Serif',serif;color:#222">T</div>
<!--EDITOR-->
<!--PVFORM-->
<!--PVIN-->
</div>
<div style="left:929px;top:294px;width:17px;height:450px;background:#f8f8f8"></div>
<div class="rs" style="left:929px;top:294px;width:17px;height:17px"></div>
<div style="left:934px;top:300px;border:4px solid transparent;border-bottom:4px solid #000;border-top:0;width:0;height:0"></div>
<div class="rs" style="left:929px;top:311px;width:17px;height:173px"></div>
<div class="rs" style="left:929px;top:727px;width:17px;height:17px"></div>
<div style="left:934px;top:734px;border:4px solid transparent;border-top:4px solid #000;border-bottom:0;width:0;height:0"></div>
<div style="left:198px;top:744px;width:748px;height:17px;background:#f0f0f0"></div>
<div style="left:480px;top:744px;width:432px;height:17px;background:#f8f8f8"></div>
<div class="rs" style="left:215px;top:744px;width:265px;height:17px"></div>
<svg style="left:202px;top:748px" width="8" height="9" viewBox="0 0 8 9" fill="none" stroke="#505050" stroke-width="1.800"><path d="M6.500 0.800L2 4.500l4.500 3.700"/></svg>
<svg style="left:917px;top:748px" width="8" height="9" viewBox="0 0 8 9" fill="none" stroke="#505050" stroke-width="1.800"><path d="M1.500 0.800L6 4.500 1.500 8.200"/></svg>
<!--SCROLL-->
<!--PREVIEW-->
<div style="left:8px;top:764px;width:941px;height:1px;background:#a0a0a0"></div><div style="left:8px;top:765px;width:941px;height:1px;background:#fff"></div>
<div class="ui" style="left:10px;top:767px;font-size:12px;letter-spacing:.1px">录像长度:00:00:33总帧数:165,速度:5帧/秒,宽度:1920,高度:1080,文件大小:3MB,<span style="letter-spacing:.33px">创建时间:2022-2-15 16:32</span></div>
<svg style="left:934px;top:769px" width="13" height="13" viewBox="0 0 13 13" stroke="#a0a0a0" stroke-width="1"><path d="M12 1L1 12M12 5L5 12M12 9L9 12"/><path d="M12 2L2 12M12 6L6 12M12 10L10 12" stroke="#fff"/></svg>
<!--STATUS-->
</div></div>
</div>
</body>
</html>
